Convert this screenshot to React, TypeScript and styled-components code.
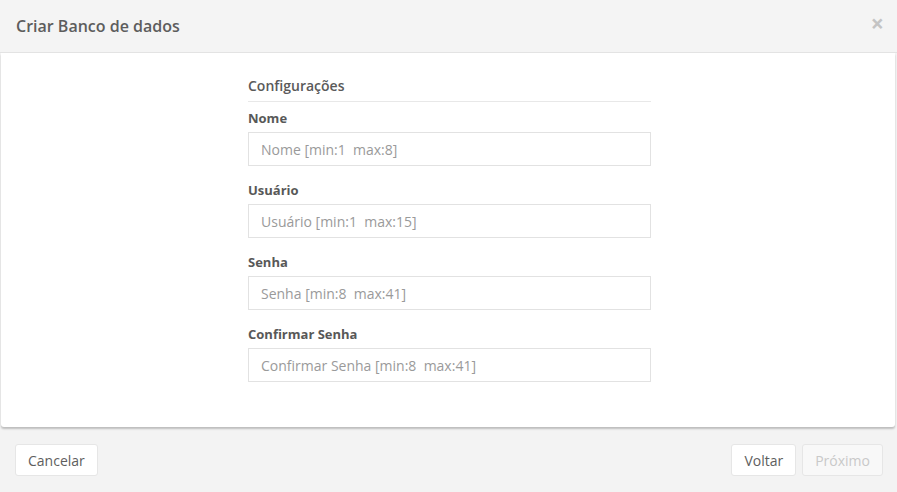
import React from "react";
import styled, { createGlobalStyle } from "styled-components";

const Global = createGlobalStyle`
  html, body { margin: 0; padding: 0; background: #f3f3f3; }
  body { font-family: "Open Sans", "Noto Sans", sans-serif; color: #555; }
  * { box-sizing: border-box; }
`;

const Page = styled.div`
  width: 897px;
  height: 492px;
  display: flex;
  flex-direction: column;
  background: #f3f3f3;
`;

const Header = styled.div`
  height: 53px;
  display: flex;
  align-items: center;
  justify-content: space-between;
  padding: 0 16px;
  background: #f4f4f4;
  border-bottom: 1px solid #e3e3e3;
`;

const Title = styled.h4`
  margin: 0;
  font-size: 16px;
  font-weight: 600;
  color: #5d5d5d;
`;

const Close = styled.button`
  border: 0;
  background: transparent;
  padding: 0;
  font-size: 23px;
  line-height: 1;
  color: #c4c4c4;
  font-weight: 700;
  font-family: "Open Sans", sans-serif;
  margin: 0 -3px 6px 0;
`;

const Body = styled.div`
  height: 374px;
  margin: 0 2px 0 1px;
  background: #fff;
  border-radius: 0 0 3px 3px;
  box-shadow: 0 2px 2px rgba(0, 0, 0, 0.22);
  display: flex;
  justify-content: center;
  padding: 23px 0 0 3px;
`;

const Form = styled.div`
  width: 403px;
  display: flex;
  flex-direction: column;
`;

const Section = styled.div`
  font-size: 14px;
  font-weight: 600;
  color: #5a5a5a;
  padding-bottom: 6px;
  border-bottom: 1px solid #e8e8e8;
  margin-bottom: 7px;
  line-height: 19px;
`;

const Group = styled.div`
  display: flex;
  flex-direction: column;
  margin-bottom: 15px;
`;

const Label = styled.label`
  font-size: 13px;
  font-weight: 700;
  color: #585858;
  line-height: 18px;
  margin-bottom: 5px;
`;

const Input = styled.input`
  height: 34px;
  width: 100%;
  border: 1px solid #e2e2e2;
  border-radius: 0;
  padding: 0 12px;
  font-family: "Open Sans", sans-serif;
  font-size: 14px;
  color: #555;
  outline: none;
  &::placeholder { color: #9a9a9a; }
`;

const Footer = styled.div`
  flex: 1;
  display: flex;
  align-items: center;
  justify-content: space-between;
  padding: 0 14px 0 15px;
  margin-top: 1px;
`;

const Actions = styled.div`
  display: flex;
  gap: 6px;
`;

const Button = styled.button<{ $disabled?: boolean }>`
  height: 32px;
  padding: 0 12px;
  border: 1px solid #e6e6e6;
  border-radius: 3px;
  background: ${(p) => (p.$disabled ? "#f8f8f8" : "#fff")};
  color: ${(p) => (p.$disabled ? "#c9c9c9" : "#5e5e5e")};
  font-family: "Open Sans", sans-serif;
  font-size: 14px;
`;

const fields = [
  { label: "Nome", ph: "Nome [min:1  max:8]" },
  { label: "Usuário", ph: "Usuário [min:1  max:15]" },
  { label: "Senha", ph: "Senha [min:8  max:41]" },
  { label: "Confirmar Senha", ph: "Confirmar Senha [min:8  max:41]" },
];

export default function App() {
  return (
    <>
      <Global />
      <Page>
        <Header>
          <Title>Criar Banco de dados</Title>
          <Close aria-label="Fechar">×</Close>
        </Header>
        <Body>
          <Form>
            <Section>Configurações</Section>
            {fields.map((f) => (
              <Group key={f.label}>
                <Label>{f.label}</Label>
                <Input placeholder={f.ph} type={f.label.includes("Senha") ? "password" : "text"} />
              </Group>
            ))}
          </Form>
        </Body>
        <Footer>
          <Button>Cancelar</Button>
          <Actions>
            <Button>Voltar</Button>
            <Button $disabled>Próximo</Button>
          </Actions>
        </Footer>
      </Page>
    </>
  );
}
